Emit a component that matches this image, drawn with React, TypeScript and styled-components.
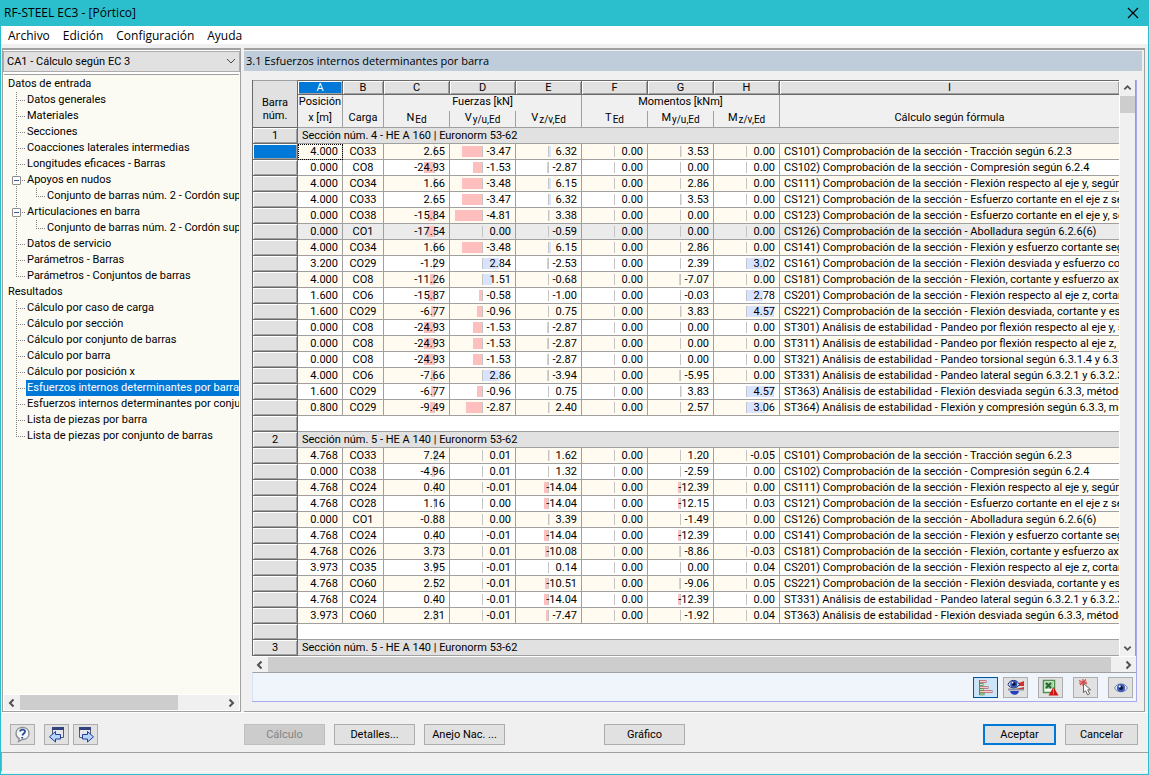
import React from "react";
import styled, { createGlobalStyle, css } from "styled-components";

const line = "#a0a0a0";
const dark = "#696969";
const face = "#f0f0f0";
const button = "#e1e1e1";
const blue = "#0078d7";
const ui = `Roboto, "Liberation Sans", sans-serif`;
const caption = `"Open Sans", "Noto Sans", sans-serif`;

const Global = createGlobalStyle`
  * { box-sizing: border-box; }
  html, body { margin: 0; padding: 0; }
  body { font: 11px/16px ${ui}; color: #000; background: ${face}; }
  button, select { font: inherit; color: inherit; margin: 0; }
  ul { list-style: none; margin: 0; padding: 0; }
`;

const Window = styled.div`
  display: flex;
  flex-direction: column;
  height: 100vh;
  min-height: 480px;
  background: ${face};
  border: 1px solid #2bbfce;
  border-top: 0;
`;

const TitleBar = styled.header`
  display: flex;
  align-items: center;
  justify-content: space-between;
  height: 26px;
  flex: none;
  padding: 0 9px 0 3px;
  background: #2bbfce;
  font: 12px/26px ${caption};
`;

const CloseButton = styled.button`
  display: flex;
  padding: 0;
  border: 0;
  background: none;
`;

const MenuBar = styled.nav`
  display: flex;
  flex: none;
  gap: 13px;
  height: 18px;
  padding: 0 7px;
  margin-bottom: 4px;
  background: #fff;
  font: 12px/19px ${caption};
`;

const MenuLink = styled.a`
  color: inherit;
  text-decoration: none;
`;

const Main = styled.main`
  display: flex;
  flex: 1;
  min-height: 0;
  padding-right: 3px;
  border-bottom: 1px solid #fff;
`;

const SidePanel = styled.aside`
  display: flex;
  flex-direction: column;
  width: 239px;
  flex: none;
  margin: 0 3px 0 1px;
  padding-bottom: 1px;
  border: 1px solid ${line};
  border-top-width: 2px;
  border-bottom: 1px solid ${line};
  background: #fff;
`;

const CaseField = styled.div`
  position: relative;
  display: flex;
  flex: none;
  margin: 1px 0 2px;
`;

const CaseSelect = styled.select`
  width: 100%;
  height: 21px;
  padding: 0 20px 0 3px;
  border: 1px solid #adadad;
  border-radius: 0;
  background: ${button};
  appearance: none;
`;

const CaseArrow = styled.svg`
  position: absolute;
  right: 4px;
  top: 7px;
  pointer-events: none;
`;

const Tree = styled.ul`
  flex: 1;
  min-height: 0;
  overflow: hidden;
  border-top: 1px solid ${line};
  margin: 0 1px;
  padding-top: 1px;
  background: #fcfbf3;
`;

const TreeRow = styled.div<{ $child?: boolean }>`
  display: flex;
  height: 16px;
  padding-left: ${(p) => (p.$child ? 12 : 3)}px;
  white-space: nowrap;
`;

const Branch = styled.span<{ $kind: "mid" | "last" | "pass" }>`
  display: flex;
  align-items: center;
  flex: none;
  width: ${(p) => (p.$kind === "pass" ? 20 : 10)}px;
  height: 16px;
  background-image: repeating-linear-gradient(180deg, #808080 0 1px, transparent 1px 2px),
    repeating-linear-gradient(90deg, #808080 0 1px, transparent 1px 2px);
  background-size: 1px ${(p) => (p.$kind === "last" ? "8px" : "16px")}, ${(p) => (p.$kind === "pass" ? "0 0" : "10px 1px")};
  background-position: 0 0, 0 8px;
  background-repeat: no-repeat;
`;

const Toggle = styled.button`
  display: flex;
  align-items: center;
  justify-content: center;
  flex: none;
  width: 9px;
  height: 9px;
  margin-left: -4px;
  padding: 0;
  border: 1px solid #8c8c8c;
  border-radius: 1px;
  background: #fff;
  &::before {
    content: "";
    width: 5px;
    height: 1px;
    background: #3a5a9c;
  }
`;

const TreeLink = styled.a<{ $selected?: boolean }>`
  flex: ${(p) => (p.$selected ? 1 : "none")};
  padding: 0 1px;
  color: ${(p) => (p.$selected ? "#fff" : "#000")};
  background: ${(p) => (p.$selected ? blue : "transparent")};
  text-decoration: none;
`;

const ScrollBar = styled.div<{ $vertical?: boolean; $inset?: boolean }>`
  display: flex;
  flex: none;
  margin: 0 ${(p) => (p.$inset ? 1 : 0)}px;
  background: ${face};
  ${(p) =>
    p.$vertical
      ? css`
          flex-direction: column;
          width: 17px;
          border-left: 1px solid #fff;
          border-right: 1px solid ${line};
        `
      : css`
          height: 16px;
          border-top: 1px solid #fff;
        `}
`;

const ScrollArrow = styled.button`
  display: flex;
  align-items: center;
  justify-content: center;
  flex: none;
  min-width: 15px;
  height: 16px;
  padding: 0 3px;
  border: 0;
  background: none;
`;

const ScrollTrack = styled.div<{ $vertical?: boolean }>`
  display: flex;
  flex: 1;
  min-width: 0;
  flex-direction: ${(p) => (p.$vertical ? "column" : "row")};
`;

const ScrollThumb = styled.div<{ $size: string }>`
  flex: 0 0 ${(p) => p.$size};
  background: #cdcdcd;
`;

const WorkPanel = styled.section`
  display: flex;
  flex-direction: column;
  flex: 1;
  min-width: 0;
  padding: 1px 2px 9px 0;
  border-top: 2px solid ${line};
  border-right: 1px solid ${line};
  border-bottom: 1px solid ${line};
`;

const PanelTitle = styled.h1`
  flex: none;
  height: 20px;
  margin: 0 0 9px;
  padding-left: 2px;
  background: #bfcddb;
  font: 11px/20px ${caption};
`;

const GridFrame = styled.div`
  display: flex;
  flex-direction: column;
  flex: 1;
  min-height: 0;
  margin: 0 5px 0 8px;
  border-right: 1px solid #a9a9ec;
  border-bottom: 1px solid #a9a9ec;
`;

const GridBody = styled.div`
  display: flex;
  flex: 1;
  min-height: 0;
`;

const GridView = styled.div`
  flex: 1;
  min-width: 0;
  overflow: hidden;
`;

const Grid = styled.table`
  width: 100%;
  table-layout: fixed;
  border-collapse: separate;
  border-spacing: 0;
  border-left: 1px solid ${dark};
  line-height: 15px;
  white-space: nowrap;
`;

const Col = styled.col<{ $w?: number }>`
  width: ${(p) => (p.$w ? p.$w + "px" : "auto")};
`;

const raised = css`
  box-shadow: inset 1px 1px #fff, inset -1px -1px ${line};
`;

const Corner = styled.th`
  padding: 0 0 5px;
  vertical-align: bottom;
  font-weight: 400;
  line-height: 13px;
  white-space: normal;
  background: ${button};
  border-top: 1px solid ${line};
  border-right: 1px solid ${dark};
  border-bottom: 1px solid ${dark};
`;

const Letter = styled.th<{ $active?: boolean }>`
  height: 15px;
  padding: 0;
  font-weight: 400;
  line-height: 12px;
  color: ${(p) => (p.$active ? "#fff" : "#000")};
  background: ${(p) => (p.$active ? blue : button)};
  border: solid ${dark};
  border-width: 1px 1px 1px 0;
  ${raised}
  &:last-child {
    border-right: 0;
  }
`;

const GroupHead = styled.th`
  height: 16px;
  padding: 0;
  font-weight: 400;
  line-height: 14px;
  vertical-align: top;
  background: ${face};
  border-right: 1px solid ${line};
  &:last-child {
    border-right: 0;
  }
`;

const SubHead = styled.th`
  height: 17px;
  padding: 0;
  font-weight: 400;
  line-height: 14px;
  vertical-align: top;
  background: ${face};
  border-right: 1px solid ${line};
  border-bottom: 1px solid ${line};
  &:last-child {
    border-right: 0;
  }
`;

const Index = styled.span`
  position: relative;
  top: 2px;
  margin-left: 1px;
  font-size: 10px;
`;

const RowHead = styled.th<{ $active?: boolean }>`
  height: 16px;
  padding: 0;
  font-weight: 400;
  background: ${(p) => (p.$active ? blue : button)};
  border-right: 1px solid ${dark};
  border-bottom: 1px solid ${dark};
  ${raised}
`;

const SectionCell = styled.td`
  padding: 0 0 0 4px;
  background: ${button};
  border-bottom: 1px solid ${line};
`;

const BlankCell = styled.td`
  padding: 0;
  background: #fff;
  border-bottom: 1px solid ${line};
`;

const DataRow = styled.tr<{ $tone: "cream" | "white" | "gray" }>`
  background: ${(p) => ({ cream: "#fffbf0", white: "#fff", gray: "#ebebeb" })[p.$tone]};
`;

const Cell = styled.td<{ $align?: "right" | "center" | "left"; $focus?: boolean }>`
  position: relative;
  height: 16px;
  padding: 0 4px;
  overflow: hidden;
  text-align: ${(p) => p.$align ?? "right"};
  border-right: 1px solid ${line};
  border-bottom: 1px solid ${line};
  ${(p) =>
    p.$focus &&
    css`
      outline: 1px dotted #000;
      outline-offset: -1px;
    `}
`;

const FormulaCell = styled(Cell)`
  padding-right: 0;
  border-right: 0;
`;

const Axis = styled.span<{ $at: number }>`
  position: absolute;
  top: 2px;
  left: ${(p) => p.$at}%;
  width: 1px;
  height: 11px;
  background: #c4c4c4;
`;

const Bar = styled.span<{ $negative: boolean }>`
  position: absolute;
  top: 0;
  ${(p) => (p.$negative ? "right: 1px" : "left: 1px")};
  height: 11px;
  background: ${(p) => (p.$negative ? "#ffbfbf" : "#d8e4ff")};
`;

const Figure = styled.span`
  position: relative;
`;

const GridTools = styled.div`
  display: flex;
  justify-content: flex-end;
  flex: none;
  gap: 10px;
  padding: 4px 3px 3px;
  border-top: 1px solid ${line};
  border-left: 1px solid #d6e2f5;
  background: #f0f4fb;
`;

const IconButton = styled.button<{ $on?: boolean; $tight?: boolean }>`
  display: flex;
  align-items: center;
  justify-content: center;
  width: 25px;
  height: 21px;
  padding: 0;
  margin-left: ${(p) => (p.$tight ? -5 : 0)}px;
  border: 1px solid ${(p) => (p.$on ? "#005499" : "#adadad")};
  background: ${(p) => (p.$on ? "#cce4f7" : button)};
`;

const Footer = styled.footer`
  display: flex;
  align-items: center;
  flex: none;
  height: 39px;
  padding: 4px 10px 0 9px;
`;

const FooterGroup = styled.div<{ $width?: number; $end?: boolean }>`
  display: flex;
  gap: 9px;
  flex: none;
  width: ${(p) => (p.$width ? p.$width + "px" : "auto")};
  margin-left: ${(p) => (p.$end ? "auto" : 0)};
`;

const PushButton = styled.button<{ $primary?: boolean; $narrow?: boolean }>`
  width: ${(p) => (p.$narrow ? 73 : 81)}px;
  height: 21px;
  padding: 0;
  line-height: 17px;
  border: ${(p) => (p.$primary ? `2px solid ${blue}` : "1px solid #adadad")};
  background: ${button};
  &:disabled {
    color: #838383;
    background: #ccc;
    border-color: #bfbfbf;
  }
`;

const StatusBar = styled.div`
  flex: none;
  height: 20px;
  margin-bottom: 2px;
  border: solid ${line};
  border-width: 1px 0 0 1px;
  border-bottom: 1px solid #fff;
`;

type Dir = "left" | "right" | "up" | "down";
const arrows: Record<Dir, string> = {
  left: "M6.5 1.5 3 5l3.5 3.5",
  right: "M3.5 1.5 7 5 3.5 8.5",
  up: "M1.5 6.5 5 3l3.5 3.5",
  down: "M1.5 3.5 5 7l3.5-3.5",
};

function Arrow({ dir }: { dir: Dir }) {
  return (
    <ScrollArrow aria-label={dir} tabIndex={-1}>
      <svg width="10" height="10" viewBox="0 0 10 10" fill="none" stroke="#505050" strokeWidth="2">
        <path d={arrows[dir]} />
      </svg>
    </ScrollArrow>
  );
}

interface Node {
  label: string;
  selected?: boolean;
  children?: Node[];
}

const tree: Node[] = [
  {
    label: "Datos de entrada",
    children: [
      { label: "Datos generales" },
      { label: "Materiales" },
      { label: "Secciones" },
      { label: "Coacciones laterales intermedias" },
      { label: "Longitudes eficaces - Barras" },
      { label: "Apoyos en nudos", children: [{ label: "Conjunto de barras núm. 2 - Cordón superior" }] },
      { label: "Articulaciones en barra", children: [{ label: "Conjunto de barras núm. 2 - Cordón superior" }] },
      { label: "Datos de servicio" },
      { label: "Parámetros - Barras" },
      { label: "Parámetros - Conjuntos de barras" },
    ],
  },
  {
    label: "Resultados",
    children: [
      { label: "Cálculo por caso de carga" },
      { label: "Cálculo por sección" },
      { label: "Cálculo por conjunto de barras" },
      { label: "Cálculo por barra" },
      { label: "Cálculo por posición x" },
      { label: "Esfuerzos internos determinantes por barra", selected: true },
      { label: "Esfuerzos internos determinantes por conjunto de barras" },
      { label: "Lista de piezas por barra" },
      { label: "Lista de piezas por conjunto de barras" },
    ],
  },
];

const letters = ["A", "B", "C", "D", "E", "F", "G", "H", "I"];
const widths = [45, 45, 41, 66, 66, 66, 66, 66, 66];

/* Axis position (percent of the cell) and pixels per unit of the bars in columns C to H. */
const scales = [
  { at: 77, px: 0.39 },
  { at: 49, px: 5.7 },
  { at: 49, px: 0.32 },
  { at: 49, px: 1 },
  { at: 49, px: 0.15 },
  { at: 49, px: 5.9 },
];

type Row = [string, string, string, string];
const cs = (n: number, t: string) => `CS${n}) Comprobación de la sección - ${t}`;
const st = (n: number, t: string) => `ST${n}) Análisis de estabilidad - ${t}`;

const sections: { id: number; title: string; rows: Row[] }[] = [
  {
    id: 1,
    title: "Sección núm. 4 - HE A 160 | Euronorm 53-62",
    rows: [
      ["4.000", "CO33", "2.65 -3.47 6.32 0.00 3.53 0.00", cs(101, "Tracción según 6.2.3")],
      ["0.000", "CO8", "-24.93 -1.53 -2.87 0.00 0.00 0.00", cs(102, "Compresión según 6.2.4")],
      ["4.000", "CO34", "1.66 -3.48 6.15 0.00 2.86 0.00", cs(111, "Flexión respecto al eje y, según 6.2.5")],
      ["4.000", "CO33", "2.65 -3.47 6.32 0.00 3.53 0.00", cs(121, "Esfuerzo cortante en el eje z según 6.2.6")],
      ["0.000", "CO38", "-15.84 -4.81 3.38 0.00 0.00 0.00", cs(123, "Esfuerzo cortante en el eje y, según 6.2.6")],
      ["0.000", "CO1", "-17.54 0.00 -0.59 0.00 0.00 0.00", cs(126, "Abolladura según 6.2.6(6)")],
      ["4.000", "CO34", "1.66 -3.48 6.15 0.00 2.86 0.00", cs(141, "Flexión y esfuerzo cortante según 6.2.5")],
      ["3.200", "CO29", "-1.29 2.84 -2.53 0.00 2.39 3.02", cs(161, "Flexión desviada y esfuerzo cortante según 6.2.6")],
      ["4.000", "CO8", "-11.26 1.51 -0.68 0.00 -7.07 0.00", cs(181, "Flexión, cortante y esfuerzo axil según 6.2.9")],
      ["1.600", "CO6", "-15.87 -0.58 -1.00 0.00 -0.03 2.78", cs(201, "Flexión respecto al eje z, cortante y esfuerzo axil")],
      ["1.600", "CO29", "-6.77 -0.96 0.75 0.00 3.83 4.57", cs(221, "Flexión desviada, cortante y esfuerzo axil")],
      ["0.000", "CO8", "-24.93 -1.53 -2.87 0.00 0.00 0.00", st(301, "Pandeo por flexión respecto al eje y, según 6.3.1")],
      ["0.000", "CO8", "-24.93 -1.53 -2.87 0.00 0.00 0.00", st(311, "Pandeo por flexión respecto al eje z, según 6.3.1")],
      ["0.000", "CO8", "-24.93 -1.53 -2.87 0.00 0.00 0.00", st(321, "Pandeo torsional según 6.3.1.4 y 6.3.1.3")],
      ["4.000", "CO6", "-7.66 2.86 -3.94 0.00 -5.95 0.00", st(331, "Pandeo lateral según 6.3.2.1 y 6.3.2.3 - Sección en I")],
      ["1.600", "CO29", "-6.77 -0.96 0.75 0.00 3.83 4.57", st(363, "Flexión desviada según 6.3.3, método 2")],
      ["0.800", "CO29", "-9.49 -2.87 2.40 0.00 2.57 3.06", st(364, "Flexión y compresión según 6.3.3, método 2")],
    ],
  },
  {
    id: 2,
    title: "Sección núm. 5 - HE A 140 | Euronorm 53-62",
    rows: [
      ["4.768", "CO33", "7.24 0.01 1.62 0.00 1.20 -0.05", cs(101, "Tracción según 6.2.3")],
      ["0.000", "CO38", "-4.96 0.01 1.32 0.00 -2.59 0.00", cs(102, "Compresión según 6.2.4")],
      ["4.768", "CO24", "0.40 -0.01 -14.04 0.00 -12.39 0.00", cs(111, "Flexión respecto al eje y, según 6.2.5")],
      ["4.768", "CO28", "1.16 0.00 -14.04 0.00 -12.15 0.03", cs(121, "Esfuerzo cortante en el eje z según 6.2.6")],
      ["0.000", "CO1", "-0.88 0.00 3.39 0.00 -1.49 0.00", cs(126, "Abolladura según 6.2.6(6)")],
      ["4.768", "CO24", "0.40 -0.01 -14.04 0.00 -12.39 0.00", cs(141, "Flexión y esfuerzo cortante según 6.2.5")],
      ["4.768", "CO26", "3.73 0.01 -10.08 0.00 -8.86 -0.03", cs(181, "Flexión, cortante y esfuerzo axil según 6.2.9")],
      ["3.973", "CO35", "3.95 -0.01 0.14 0.00 0.00 0.04", cs(201, "Flexión respecto al eje z, cortante y esfuerzo axil")],
      ["4.768", "CO60", "2.52 -0.01 -10.51 0.00 -9.06 0.05", cs(221, "Flexión desviada, cortante y esfuerzo axil")],
      ["4.768", "CO24", "0.40 -0.01 -14.04 0.00 -12.39 0.00", st(331, "Pandeo lateral según 6.3.2.1 y 6.3.2.3 - Sección en I")],
      ["3.973", "CO60", "2.31 -0.01 -7.47 0.00 -1.92 0.04", st(363, "Flexión desviada según 6.3.3, método 2")],
    ],
  },
  { id: 3, title: "Sección núm. 5 - HE A 140 | Euronorm 53-62", rows: [] },
];

function ValueCell({ text, column }: { text: string; column: number }) {
  const value = Number(text);
  const { at, px } = scales[column];
  const size = Math.round(Math.abs(value) * px);
  return (
    <Cell>
      <Axis $at={at}>{size > 0 && <Bar $negative={value < 0} style={{ width: size }} />}</Axis>
      <Figure>{text}</Figure>
    </Cell>
  );
}

function ForcesTable() {
  return (
    <Grid>
      <colgroup>
        {widths.map((w, i) => (
          <Col key={i} $w={w} />
        ))}
        <Col />
      </colgroup>
      <thead>
        <tr>
          <Corner rowSpan={3}>
            Barra
            <br />
            núm.
          </Corner>
          {letters.map((l) => (
            <Letter key={l} $active={l === "A"}>
              {l}
            </Letter>
          ))}
        </tr>
        <tr>
          <GroupHead>Posición</GroupHead>
          <GroupHead />
          <GroupHead colSpan={3}>Fuerzas [kN]</GroupHead>
          <GroupHead colSpan={3}>Momentos [kNm]</GroupHead>
          <GroupHead />
        </tr>
        <tr>
          <SubHead>x [m]</SubHead>
          <SubHead>Carga</SubHead>
          <SubHead>N<Index>Ed</Index></SubHead>
          <SubHead>V<Index>y/u,Ed</Index></SubHead>
          <SubHead>V<Index>z/v,Ed</Index></SubHead>
          <SubHead>T<Index>Ed</Index></SubHead>
          <SubHead>M<Index>y/u,Ed</Index></SubHead>
          <SubHead>M<Index>z/v,Ed</Index></SubHead>
          <SubHead>Cálculo según fórmula</SubHead>
        </tr>
      </thead>
      {sections.map((s) => (
        <tbody key={s.id}>
          <tr>
            <RowHead>{s.id}</RowHead>
            <SectionCell colSpan={9}>{s.title}</SectionCell>
          </tr>
          {s.rows.map(([x, load, values, formula], i) => {
            const focus = s.id === 1 && i === 0;
            const tone = s.id === 1 && i === 5 ? "gray" : i % 2 ? "white" : "cream";
            return (
              <DataRow key={i} $tone={tone}>
                <RowHead $active={focus} />
                <Cell $focus={focus}>{x}</Cell>
                <Cell $align="center">{load}</Cell>
                {values.split(" ").map((v, c) => (
                  <ValueCell key={c} text={v} column={c} />
                ))}
                <FormulaCell $align="left">{formula}</FormulaCell>
              </DataRow>
            );
          })}
          {s.rows.length > 0 && (
            <tr>
              <RowHead />
              <BlankCell colSpan={9} />
            </tr>
          )}
        </tbody>
      ))}
    </Grid>
  );
}

const BarsIcon = () => (
  <svg width="17" height="16" viewBox="0 0 17 16">
    <path d="M2.500 0v15" stroke="#777" />
    <path d="M2.500 1.500h7M2.500 7.500h9M2.500 11.500h13" stroke="#b85a5a" strokeWidth="2.600" />
    <path d="M3 1.500h6M3 7.500h8M3 11.500h12" stroke="#fcc" />
    <path d="M2.500 4.500h4M2.500 9.500h4M2.500 14h5" stroke="#4a8a4a" strokeWidth="2.400" />
    <path d="M3 4.500h3M3 9.500h3M3 14h4" stroke="#bfeabf" />
  </svg>
);

const RangeIcon = () => (
  <svg width="18" height="17" viewBox="0 0 18 17">
    <path d="M9 5 17 2v5H9Z" fill="#d23030" />
    <path d="M1 9.500h16v2H1Z" fill="#8890a0" />
    <path d="M9 10 17 8v2Z" fill="#d23030" />
    <path d="M3 12h9c-1 5-8 5-9 0Z" fill="#2440c0" />
    <path d="M1 5.500C3 0 10 0 12.500 5.500 10 10 3 10 1 5.500Z" fill="#dfe6f8" stroke="#18246a" />
    <circle cx="6.800" cy="5" r="3.600" fill="#2f56c0" />
    <circle cx="6.800" cy="5" r="1.800" fill="#050c38" />
    <circle cx="5.500" cy="3.700" r="0.900" fill="#fff" />
  </svg>
);

const ExcelIcon = () => (
  <svg width="17" height="17" viewBox="0 0 17 17">
    <path d="M1.500 1.500h11v12h-11Z" fill="#f2f8f0" stroke="#4f8f4f" strokeWidth="1.500" />
    <path d="M3 3h8v7H3Z" fill="#a9cfa4" />
    <path d="m4 4 5 5M9 4 4 9" stroke="#1f6a2c" strokeWidth="2" />
    <path d="M11.500 8 16.500 16.500h-10Z" fill="#cf1414" />
    <path d="M11.500 9.500v6" stroke="#ff6a5a" />
  </svg>
);

const PickIcon = () => (
  <svg width="16" height="17" viewBox="0 0 16 17">
    <path d="M1 1.500 9 5M8 .5 2 6M5 0v7M1 4l8-1" stroke="#d84a4a" strokeWidth="1.200" />
    <path d="M5.500 4.500v9l2.200-1.700 2 4 2-1-2-4h3Z" fill="#fff" stroke="#666" />
  </svg>
);

const EyeIcon = () => (
  <svg width="14" height="14" viewBox="0 0 14 14">
    <path d="M.5 7C3 1.500 11 1.500 13.500 7 11 12 3 12 .5 7Z" fill="#e6eaf5" stroke="#7580a8" />
    <circle cx="7" cy="7" r="4" fill="#3a5cb8" />
    <circle cx="7" cy="7" r="2" fill="#0a1440" />
    <circle cx="5.700" cy="5.600" r="1" fill="#fff" />
  </svg>
);

const HelpIcon = () => (
  <svg width="17" height="17" viewBox="0 0 17 17" fill="none">
    <path d="M8.500 1.500c4 0 6.500 2.600 6.500 6s-2.500 6-6.500 6l-4 2 .8-2.800C3 11.500 2 9.800 2 7.500c0-3.400 2.500-6 6.500-6Z" fill="#f5f6f8" stroke="#8a8d94" strokeWidth="1.300" />
    <path d="M6 5.500c.4-2.600 5.300-2.600 5 .2-.2 1.800-2.300 1.800-2.500 3.800M8.200 11v1.500" stroke="#2b4a94" strokeWidth="1.800" />
  </svg>
);

function PageIcon({ next }: { next?: boolean }) {
  return (
    <svg width="18" height="17" viewBox="0 0 18 17">
      <path d={next ? "M2.500 1.500h11v10h-11Z" : "M4.500 1.500h11v10h-11Z"} fill="#e4e6ea" stroke="#555b68" />
      <path d={next ? "M2 1h12v3H2Z" : "M4 1h12v3H4Z"} fill="#33437e" />
      <path
        d={next ? "M5.500 8.500h5V5.500l6 5.300-6 5.200v-3h-5Z" : "M12.500 8.500h-5V5.500l-6 5.300 6 5.200v-3h5Z"}
        fill="#b9d4fa"
        stroke="#1d3f9a"
      />
    </svg>
  );
}

function SideTree() {
  return (
    <Tree>
      {tree.map((root) => (
        <li key={root.label}>
          <TreeRow>
            <TreeLink href="#">{root.label}</TreeLink>
          </TreeRow>
          <ul>
            {root.children!.map((node, i) => (
              <li key={node.label}>
                <TreeRow $child>
                  <Branch $kind={i === root.children!.length - 1 ? "last" : "mid"}>
                    {node.children && <Toggle aria-label="Contraer" />}
                  </Branch>
                  <TreeLink href="#" $selected={node.selected}>
                    {node.label}
                  </TreeLink>
                </TreeRow>
                {node.children && (
                  <ul>
                    {node.children.map((leaf) => (
                      <li key={leaf.label}>
                        <TreeRow $child>
                          <Branch $kind="pass" />
                          <Branch $kind="last" />
                          <TreeLink href="#">{leaf.label}</TreeLink>
                        </TreeRow>
                      </li>
                    ))}
                  </ul>
                )}
              </li>
            ))}
          </ul>
        </li>
      ))}
    </Tree>
  );
}

export default function App() {
  return (
    <Window>
      <Global />
      <TitleBar>
        <span>RF-STEEL EC3 - [Pórtico]</span>
        <CloseButton aria-label="Cerrar">
          <svg width="12" height="12" viewBox="0 0 12 12" stroke="#000" strokeWidth="1.200">
            <path d="M1 1l10 10M11 1 1 11" />
          </svg>
        </CloseButton>
      </TitleBar>
      <MenuBar>
        {["Archivo", "Edición", "Configuración", "Ayuda"].map((m) => (
          <MenuLink key={m} href="#">
            {m}
          </MenuLink>
        ))}
      </MenuBar>
      <Main>
        <SidePanel>
          <CaseField>
            <CaseSelect aria-label="Caso de cálculo">
              <option>CA1 - Cálculo según EC 3</option>
            </CaseSelect>
            <CaseArrow width="10" height="7" viewBox="0 0 10 7" fill="none" stroke="#444">
              <path d="m1 1 4 4 4-4" />
            </CaseArrow>
          </CaseField>
          <SideTree />
          <ScrollBar $inset>
            <Arrow dir="left" />
            <ScrollTrack>
              <ScrollThumb $size="78%" />
            </ScrollTrack>
            <Arrow dir="right" />
          </ScrollBar>
        </SidePanel>
        <WorkPanel>
          <PanelTitle>3.1 Esfuerzos internos determinantes por barra</PanelTitle>
          <GridFrame>
            <GridBody>
              <GridView>
                <ForcesTable />
              </GridView>
              <ScrollBar $vertical>
                <Arrow dir="up" />
                <ScrollTrack $vertical>
                  <ScrollThumb $size="17px" />
                </ScrollTrack>
                <Arrow dir="down" />
              </ScrollBar>
            </GridBody>
            <ScrollBar>
              <Arrow dir="left" />
              <ScrollTrack>
                <ScrollThumb $size="99%" />
              </ScrollTrack>
              <Arrow dir="right" />
            </ScrollBar>
            <GridTools>
              <IconButton $on aria-label="Barras de valores"><BarsIcon /></IconButton>
              <IconButton $tight aria-label="Rango de colores"><RangeIcon /></IconButton>
              <IconButton aria-label="Exportar a Excel"><ExcelIcon /></IconButton>
              <IconButton aria-label="Seleccionar barra"><PickIcon /></IconButton>
              <IconButton aria-label="Modo de vista"><EyeIcon /></IconButton>
            </GridTools>
          </GridFrame>
        </WorkPanel>
      </Main>
      <Footer>
        <FooterGroup $width={234}>
          <IconButton aria-label="Ayuda"><HelpIcon /></IconButton>
          <IconButton aria-label="Tabla anterior"><PageIcon /></IconButton>
          <IconButton $tight aria-label="Tabla siguiente"><PageIcon next /></IconButton>
        </FooterGroup>
        <FooterGroup $width={360}>
          <PushButton disabled>Cálculo</PushButton>
          <PushButton>Detalles...</PushButton>
          <PushButton>Anejo Nac. ...</PushButton>
        </FooterGroup>
        <PushButton>Gráfico</PushButton>
        <FooterGroup $end>
          <PushButton $narrow $primary>Aceptar</PushButton>
          <PushButton $narrow>Cancelar</PushButton>
        </FooterGroup>
      </Footer>
      <StatusBar />
    </Window>
  );
}
